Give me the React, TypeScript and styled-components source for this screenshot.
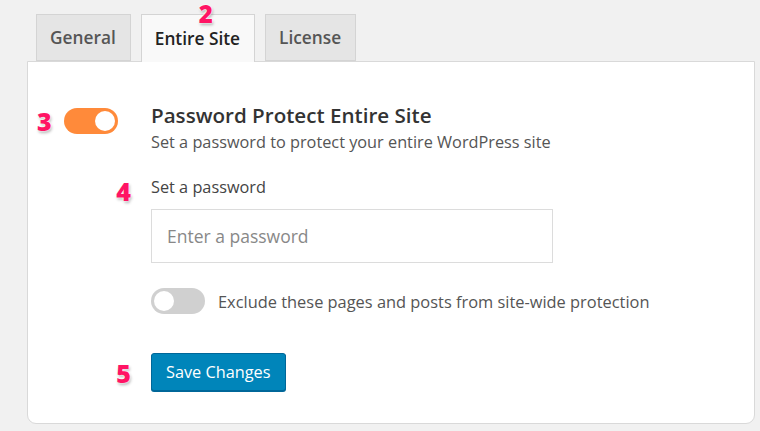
import styled, { createGlobalStyle } from 'styled-components';

const GlobalStyle = createGlobalStyle`
  * { box-sizing: border-box; }
  body {
    margin: 0;
    background: #f1f1f1;
    font-family: 'Open Sans', 'Noto Sans', sans-serif;
    color: #444;
  }
`;

const Page = styled.div`
  width: 760px;
  height: 431px;
  padding: 14px 5px 0 27px;
`;

const TabBar = styled.div`
  display: flex;
  gap: 10px;
  padding-left: 9px;
  height: 47px;
  position: relative;
  z-index: 1;
`;

const Tab = styled.div<{ $active?: boolean }>`
  position: relative;
  display: flex;
  align-items: center;
  justify-content: center;
  height: ${({ $active }) => ($active ? '48px' : '47px')};
  padding: 0 14px 0 13px;
  background: ${({ $active }) => ($active ? '#f9f9f9' : '#e5e5e5')};
  border: 1px solid #d4d4d4;
  border-bottom: ${({ $active }) => ($active ? 'none' : '1px solid #d4d4d4')};
  font-size: 17.3px;
  font-weight: 600;
  color: ${({ $active }) => ($active ? '#222' : '#555')};
`;

const Callout = styled.span`
  font-family: 'Open Sans', 'Noto Sans', sans-serif;
  font-size: 25px;
  font-weight: 800;
  line-height: 1;
  color: #ff1464;
  text-shadow: 0 0 2px #fff, 0 0 2px #fff, 1px 2px 3px rgba(0, 0, 0, 0.3);
`;

const TabCallout = styled(Callout)`
  position: absolute;
  top: -13px;
  left: 57px;
  font-size: 24px;
`;

const Panel = styled.div`
  height: 363px;
  background: #fff;
  border: 1px solid #d9d9d9;
  border-radius: 0 0 9px 9px;
  padding-top: 40px;
  display: grid;
  grid-template-columns: 123px 1fr;
  align-content: start;
`;

const Gutter = styled.div`
  display: flex;
  align-items: flex-start;
  justify-content: flex-end;
  padding-right: 20px;
`;

const ToggleGutter = styled.div`
  display: flex;
  align-items: flex-start;
  gap: 12px;
  padding: 6px 0 0 9px;
`;

const Switch = styled.div<{ $on?: boolean }>`
  width: 54px;
  height: 26px;
  border-radius: 13px;
  padding: 3px;
  display: flex;
  justify-content: ${({ $on }) => ($on ? 'flex-end' : 'flex-start')};
  background: ${({ $on }) => ($on ? '#ff8a3a' : '#d0d0d0')};
  flex-shrink: 0;

  &::after {
    content: '';
    width: 20px;
    height: 20px;
    border-radius: 50%;
    background: #fff;
  }
`;

const Title = styled.h2`
  margin: 0;
  font-size: 20.6px;
  font-weight: 600;
  line-height: 26px;
  color: #333;
`;

const Description = styled.p`
  margin: 4px 0 0;
  font-size: 16.3px;
  line-height: 20px;
  color: #555;
`;

const Label = styled.label`
  display: block;
  font-size: 16.3px;
  line-height: 20px;
  color: #444;
`;

const Input = styled.input`
  display: block;
  width: 402px;
  height: 54px;
  margin-top: 12px;
  padding: 0 15px;
  border: 1px solid #dcdcdc;
  font-family: inherit;
  font-size: 17.5px;
  color: #333;
  outline: none;

  &::placeholder {
    color: #888;
  }
`;

const OptionRow = styled.div`
  display: flex;
  align-items: center;
  gap: 13px;
  font-size: 16.4px;
  color: #555;
`;

const SaveButton = styled.button`
  height: 38px;
  padding: 0 14px;
  background: #0085ba;
  border: 1px solid #006799;
  border-radius: 3px;
  box-shadow: 0 1px 0 #006799;
  font-family: inherit;
  font-size: 16.3px;
  color: #fff;
`;

const Cell = styled.div<{ $mt?: number }>`
  margin-top: ${({ $mt }) => $mt || 0}px;
`;

export default function App() {
  return (
    <Page>
      <GlobalStyle />
      <TabBar>
        <Tab>General</Tab>
        <Tab $active>
          <TabCallout>2</TabCallout>
          Entire Site
        </Tab>
        <Tab>License</Tab>
      </TabBar>
      <Panel>
        <ToggleGutter>
          <Callout style={{ marginTop: 1 }}>3</Callout>
          <Switch $on />
        </ToggleGutter>
        <Cell>
          <Title>Password Protect Entire Site</Title>
          <Description>Set a password to protect your entire WordPress site</Description>
        </Cell>

        <Gutter>
          <Callout style={{ marginTop: 27 }}>4</Callout>
        </Gutter>
        <Cell $mt={25}>
          <Label>Set a password</Label>
          <Input placeholder="Enter a password" />
        </Cell>

        <div />
        <Cell $mt={25}>
          <OptionRow>
            <Switch />
            Exclude these pages and posts from site-wide protection
          </OptionRow>
        </Cell>

        <Gutter>
          <Callout style={{ marginTop: 47 }}>5</Callout>
        </Gutter>
        <Cell $mt={39}>
          <SaveButton>Save Changes</SaveButton>
        </Cell>
      </Panel>
    </Page>
  );
}
